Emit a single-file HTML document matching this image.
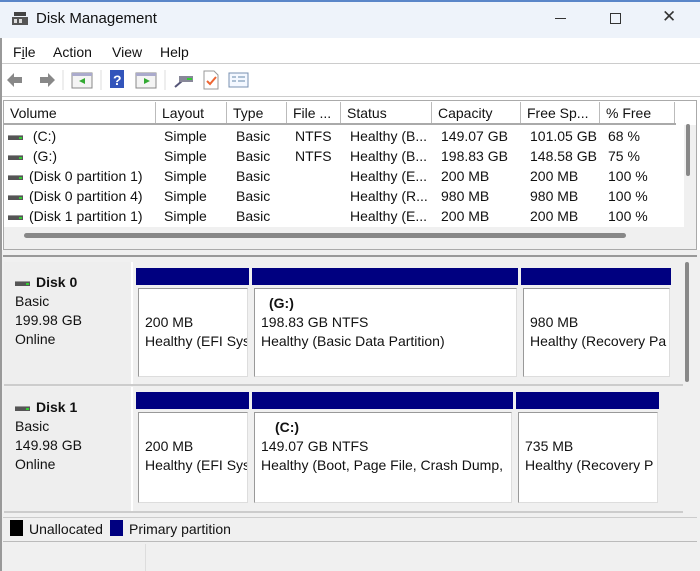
<!DOCTYPE html>
<html><head><meta charset="utf-8"><style>
*{margin:0;padding:0;box-sizing:border-box}
body{width:700px;height:571px;overflow:hidden;background:#fff;font-family:"Liberation Sans",sans-serif;font-size:14px;color:#111;position:relative}
.a{position:absolute;white-space:nowrap}
.hd{position:absolute;top:102px;height:22px;border-right:1px solid #bbb;padding-left:6px;line-height:22px;background:#fff}
.r{position:absolute;font-size:14px;line-height:20px;white-space:nowrap}
.di{display:inline-block;width:15px;height:5px;background:#555;border-top:1px solid #999;margin-right:6px;vertical-align:middle;position:relative}
.di:after{content:"";position:absolute;right:1px;top:1px;width:3px;height:2px;background:#3c3}
.bar{position:absolute;background:#000080}
.box{position:absolute;background:#fff;border:1px solid #999;border-right-color:#ddd;border-bottom-color:#ddd;padding:0 0 0 6px;line-height:19px;font-size:14px;overflow:hidden;white-space:nowrap}
</style></head><body>
<div class="a" style="left:0;top:0;width:700px;height:38px;background:#eef3fa"></div>
<div class="a" style="left:0;top:0;width:700px;height:2px;background:#5a86c8"></div>
<svg class="a" style="left:11px;top:11px" width="18" height="16"><rect x="3" y="1" width="12" height="4" fill="#444"/><rect x="1" y="6" width="16" height="8" fill="#555"/><rect x="3" y="8" width="3" height="4" fill="#ddd"/><rect x="8" y="8" width="3" height="4" fill="#ddd"/></svg>
<div class="a" style="left:36px;top:10px;font-size:15px">Disk Management</div>
<div class="a" style="left:555px;top:18px;width:11px;height:1px;background:#333"></div>
<div class="a" style="left:610px;top:13px;width:11px;height:11px;border:1px solid #333"></div>
<div class="a" style="left:662px;top:7px;font-size:17px;color:#333">✕</div>
<div class="a" style="left:13px;top:44px">F<u>i</u>le</div>
<div class="a" style="left:53px;top:44px">Action</div>
<div class="a" style="left:112px;top:44px">View</div>
<div class="a" style="left:160px;top:44px">Help</div>
<div class="a" style="left:0;top:63px;width:700px;height:1px;background:#ccc"></div>
<svg class="a" style="left:5px;top:70px" width="250" height="20">
<path d="M2 10 L9 3 V7 H17 V13 H9 V17 Z" fill="#888"/>
<path d="M50 10 L43 3 V7 H35 V13 H43 V17 Z" fill="#888"/>
<line x1="58" y1="0" x2="58" y2="20" stroke="#ddd"/>
<rect x="67" y="3" width="20" height="15" fill="#f4f4f4" stroke="#888"/><rect x="67" y="3" width="20" height="3" fill="#aac"/><path d="M80 8 L74 11 L80 14Z" fill="#3a3"/>
<line x1="96" y1="0" x2="96" y2="20" stroke="#ddd"/>
<rect x="105" y="0" width="14" height="18" fill="#3355bb"/><text x="108" y="15" fill="#fff" font-size="14" font-family="Liberation Sans" font-weight="bold">?</text>
<rect x="131" y="3" width="20" height="15" fill="#f4f4f4" stroke="#888"/><rect x="131" y="3" width="20" height="3" fill="#aac"/><path d="M139 8 L145 11 L139 14Z" fill="#3a3"/>
<line x1="160" y1="0" x2="160" y2="20" stroke="#ddd"/>
<path d="M170 17 L177 11" stroke="#557" stroke-width="2"/><rect x="174" y="6" width="14" height="6" fill="#889"/><rect x="182" y="8" width="5" height="2" fill="#3c3"/>
<path d="M199 1 H209 L213 5 V19 H199Z" fill="#fff" stroke="#999"/><path d="M202 11 L205 14 L211 7" stroke="#e63" stroke-width="2" fill="none"/>
<rect x="224" y="3" width="19" height="14" fill="#f4f8ff" stroke="#7890b0"/><path d="M227 7h4M227 11h4M233 7h7M233 11h7" stroke="#68a"/>
</svg>
<div class="a" style="left:0;top:96px;width:700px;height:1px;background:#ccc"></div>
<div class="a" style="left:3px;top:100px;width:694px;height:150px;border:1px solid #aaa;background:#fff"></div>
<div class="hd" style="left:4px;width:152px">Volume</div>
<div class="hd" style="left:156px;width:71px">Layout</div>
<div class="hd" style="left:227px;width:60px">Type</div>
<div class="hd" style="left:287px;width:54px">File ...</div>
<div class="hd" style="left:341px;width:91px">Status</div>
<div class="hd" style="left:432px;width:89px">Capacity</div>
<div class="hd" style="left:521px;width:79px">Free Sp...</div>
<div class="hd" style="left:600px;width:75px">% Free</div>
<div class="a" style="left:4px;top:123px;width:672px;height:2px;background:#aaa"></div>
<div class="r" style="left:8px;top:126px"><span class="di"></span> (C:)<br><span class="di"></span> (G:)<br><span class="di"></span>(Disk 0 partition 1)<br><span class="di"></span>(Disk 0 partition 4)<br><span class="di"></span>(Disk 1 partition 1)</div>
<div class="r" style="left:164px;top:126px">Simple<br>Simple<br>Simple<br>Simple<br>Simple</div>
<div class="r" style="left:236px;top:126px">Basic<br>Basic<br>Basic<br>Basic<br>Basic</div>
<div class="r" style="left:295px;top:126px">NTFS<br>NTFS</div>
<div class="r" style="left:350px;top:126px">Healthy (B...<br>Healthy (B...<br>Healthy (E...<br>Healthy (R...<br>Healthy (E...</div>
<div class="r" style="left:441px;top:126px">149.07 GB<br>198.83 GB<br>200 MB<br>980 MB<br>200 MB</div>
<div class="r" style="left:530px;top:126px">101.05 GB<br>148.58 GB<br>200 MB<br>980 MB<br>200 MB</div>
<div class="r" style="left:608px;top:126px">68 %<br>75 %<br>100 %<br>100 %<br>100 %</div>
<div class="a" style="left:4px;top:227px;width:680px;height:22px;background:#f0f0f0"></div>
<div class="a" style="left:24px;top:233px;width:602px;height:5px;background:#888;border-radius:3px"></div>
<div class="a" style="left:684px;top:125px;width:12px;height:124px;background:#f0f0f0"></div>
<div class="a" style="left:686px;top:124px;width:4px;height:52px;background:#888;border-radius:2px"></div>
<div class="a" style="left:0;top:250px;width:700px;height:321px;background:#f0f0f0"></div>
<div class="a" style="left:3px;top:255px;width:694px;height:262px;border-top:2px solid #999;background:#f0f0f0"></div>
<div class="a" style="left:683px;top:258px;width:14px;height:258px;background:#f0f0f0"></div>
<div class="a" style="left:685px;top:262px;width:4px;height:120px;background:#888;border-radius:2px"></div>
<div class="a" style="left:4px;top:262px;width:129px;height:122px;background:#eee;border-right:2px solid #fff"></div>
<div class="a" style="left:4px;top:384px;width:679px;height:2px;background:#ccc"></div>
<div class="a" style="left:15px;top:273px;line-height:19px"><span class="di"></span><b>Disk 0</b><br>Basic<br>199.98 GB<br>Online</div>
<div class="bar" style="left:136px;top:268px;width:113px;height:17px"></div>
<div class="bar" style="left:252px;top:268px;width:266px;height:17px"></div>
<div class="bar" style="left:521px;top:268px;width:150px;height:17px"></div>
<div class="box" style="left:138px;top:288px;width:110px;height:89px;padding-top:24px">200 MB<br>Healthy (EFI Sys</div>
<div class="box" style="left:254px;top:288px;width:263px;height:89px;padding-top:5px"><b style="padding-left:8px">(G:)</b><br>198.83 GB NTFS<br>Healthy (Basic Data Partition)</div>
<div class="box" style="left:523px;top:288px;width:147px;height:89px;padding-top:24px">980 MB<br>Healthy (Recovery Pa</div>
<div class="a" style="left:4px;top:387px;width:129px;height:124px;background:#eee;border-right:2px solid #fff"></div>
<div class="a" style="left:15px;top:398px;line-height:19px"><span class="di"></span><b>Disk 1</b><br>Basic<br>149.98 GB<br>Online</div>
<div class="bar" style="left:136px;top:392px;width:113px;height:17px"></div>
<div class="bar" style="left:252px;top:392px;width:261px;height:17px"></div>
<div class="bar" style="left:516px;top:392px;width:143px;height:17px"></div>
<div class="box" style="left:138px;top:412px;width:110px;height:91px;padding-top:24px">200 MB<br>Healthy (EFI Sys</div>
<div class="box" style="left:254px;top:412px;width:258px;height:91px;padding-top:5px"><b style="padding-left:14px">(C:)</b><br>149.07 GB NTFS<br>Healthy (Boot, Page File, Crash Dump,</div>
<div class="box" style="left:518px;top:412px;width:140px;height:91px;padding-top:24px">735 MB<br>Healthy (Recovery P</div>
<div class="a" style="left:4px;top:511px;width:679px;height:2px;background:#ccc"></div>
<div class="a" style="left:3px;top:517px;width:694px;height:25px;border-top:1px solid #ccc;border-bottom:1px solid #bbb;background:#f0f0f0"></div>
<div class="a" style="left:10px;top:520px;width:13px;height:16px;background:#000"></div>
<div class="a" style="left:29px;top:521px">Unallocated</div>
<div class="a" style="left:110px;top:520px;width:13px;height:16px;background:#000080"></div>
<div class="a" style="left:129px;top:521px">Primary partition</div>
<div class="a" style="left:145px;top:544px;width:1px;height:27px;background:#ddd"></div>
<div class="a" style="left:0;top:38px;width:2px;height:533px;background:#999"></div>
</body></html>
